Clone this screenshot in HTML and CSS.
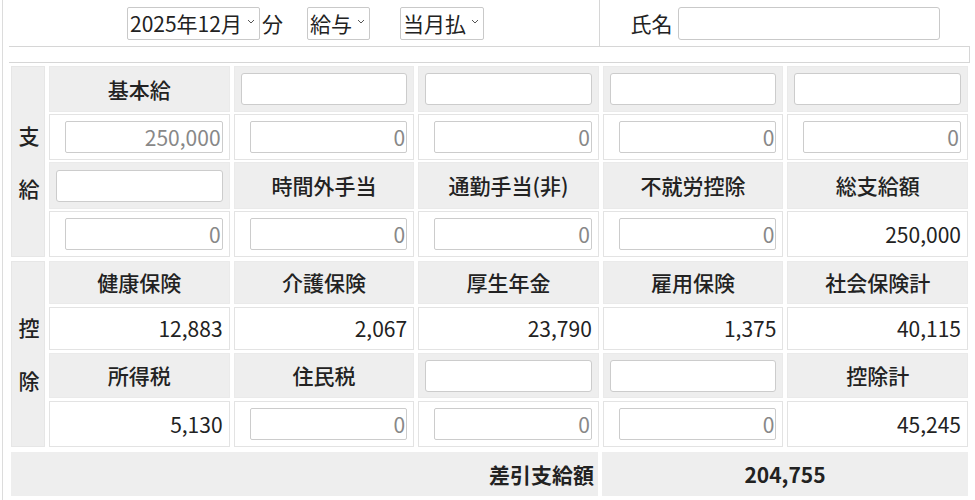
FILE: index.html
```html
<!DOCTYPE html>
<html lang="ja">
<head>
<meta charset="utf-8">
<title>給与明細</title>
<link rel="stylesheet" href="styles.css">
</head>
<body>
<div class="page">
  <div class="top">
    <div class="top-left">
      <span class="sel sel-month">
        <select><option>2025年12月</option></select>
        <svg class="chev" viewBox="0 0 8 5" width="8" height="5"><path d="M1 1 L4 4 L7 1" fill="none" stroke="#555" stroke-width="1"/></svg>
      </span><span class="bun">分</span>
      <span class="sel sel-kind">
        <select><option>給与</option></select>
        <svg class="chev" viewBox="0 0 8 5" width="8" height="5"><path d="M1 1 L4 4 L7 1" fill="none" stroke="#555" stroke-width="1"/></svg>
      </span>
      <span class="sel sel-pay">
        <select><option>当月払</option></select>
        <svg class="chev" viewBox="0 0 8 5" width="8" height="5"><path d="M1 1 L4 4 L7 1" fill="none" stroke="#555" stroke-width="1"/></svg>
      </span>
    </div>
    <div class="top-right">
      <span class="name-label">氏名</span><input class="name-input" type="text">
    </div>
  </div>
  <div class="strip"></div>

  <div class="section sec1">
    <div class="side"><span>支</span><span>給</span></div>
    <div class="cell head">基本給</div>
    <div class="cell head"><input class="hin" type="text"></div>
    <div class="cell head"><input class="hin" type="text"></div>
    <div class="cell head"><input class="hin" type="text"></div>
    <div class="cell head"><input class="hin" type="text"></div>

    <div class="cell val"><input class="vin" type="text" value="250,000"></div>
    <div class="cell val"><input class="vin" type="text" value="0"></div>
    <div class="cell val"><input class="vin" type="text" value="0"></div>
    <div class="cell val"><input class="vin" type="text" value="0"></div>
    <div class="cell val"><input class="vin" type="text" value="0"></div>

    <div class="cell head"><input class="hin" type="text"></div>
    <div class="cell head">時間外手当</div>
    <div class="cell head">通勤手当(非)</div>
    <div class="cell head">不就労控除</div>
    <div class="cell head">総支給額</div>

    <div class="cell val"><input class="vin" type="text" value="0"></div>
    <div class="cell val"><input class="vin" type="text" value="0"></div>
    <div class="cell val"><input class="vin" type="text" value="0"></div>
    <div class="cell val"><input class="vin" type="text" value="0"></div>
    <div class="cell num">250,000</div>
  </div>

  <div class="section sec2">
    <div class="side"><span>控</span><span>除</span></div>
    <div class="cell head">健康保険</div>
    <div class="cell head">介護保険</div>
    <div class="cell head">厚生年金</div>
    <div class="cell head">雇用保険</div>
    <div class="cell head">社会保険計</div>

    <div class="cell num">12,883</div>
    <div class="cell num">2,067</div>
    <div class="cell num">23,790</div>
    <div class="cell num">1,375</div>
    <div class="cell num">40,115</div>

    <div class="cell head">所得税</div>
    <div class="cell head">住民税</div>
    <div class="cell head"><input class="hin" type="text"></div>
    <div class="cell head"><input class="hin" type="text"></div>
    <div class="cell head">控除計</div>

    <div class="cell num">5,130</div>
    <div class="cell val"><input class="vin" type="text" value="0"></div>
    <div class="cell val"><input class="vin" type="text" value="0"></div>
    <div class="cell val"><input class="vin" type="text" value="0"></div>
    <div class="cell num">45,245</div>
  </div>

  <div class="total">
    <div class="total-label">差引支給額</div>
    <div class="total-value">204,755</div>
  </div>
</div>
</body>
</html>
```

FILE: styles.css
```css
* { box-sizing: border-box; }
html, body { margin: 0; padding: 0; background: #fff; }
body {
  font-family: "Noto Sans CJK JP", "Noto Sans", sans-serif;
  font-size: 21px;
  color: #222;
  width: 975px;
  height: 500px;
  overflow: hidden;
}
.page {
  margin-left: 2px;
  border-left: 1px solid #dcdcdc;
  padding: 0 5px 0 6px;
  height: 500px;
}
.top {
  display: flex;
  height: 47px;
  border-bottom: 1px solid #d6d6d6;
}
.top-left {
  width: 591px;
  border-right: 1px solid #d6d6d6;
  display: flex;
  align-items: center;
  justify-content: center;
  padding-left: 3px;
}
.top-right {
  flex: 1;
  display: flex;
  align-items: center;
  justify-content: center;
}
.sel { position: relative; display: inline-block; height: 33px; }
.sel select {
  appearance: none;
  -webkit-appearance: none;
  font-family: inherit;
  font-size: 21px;
  color: #222;
  height: 33px;
  line-height: 31px;
  padding: 0 17px 0 2px;
  border: 1px solid #c9c9c9;
  border-radius: 2px;
  background: #fff;
}
.chev { position: absolute; right: 5px; top: 12px; }
.bun { margin-left: 2px; line-height: 1; }
.sel-kind { margin-left: 24px; }
.sel-pay { margin-left: 30px; }
.name-label { line-height: 1; }
.name-input {
  margin-left: 5px;
  width: 262px;
  height: 33px;
  border: 1px solid #c9c9c9;
  border-radius: 3px;
  background: #fff;
}
.strip {
  height: 16px;
  border-bottom: 1px solid #d6d6d6;
  border-right: 1px solid #d6d6d6;
}
.section {
  display: grid;
  grid-template-columns: 34px repeat(5, 1fr);
  column-gap: 4px;
  row-gap: 2px;
  margin: 3px 2px 0 2px;
}
.sec1 { grid-template-rows: 46px 46px 47px 46px; }
.sec2 { grid-template-rows: 43px 43px 45px 46px; margin-top: 4px; row-gap: 3px; }
.side {
  grid-row: 1 / span 4;
  background: #eeeeee;
  border: 1px solid #e6e6e6;
  display: flex;
  flex-direction: column;
  align-items: center;
  justify-content: center;
  gap: 32px;
  font-weight: 500;
  line-height: 1;
  padding-left: 2px;
}
.cell {
  border: 1px solid #e3e3e3;
  display: flex;
  align-items: center;
  line-height: 1;
}
.head {
  background: #eeeeee;
  border-color: #eaeaea;
  justify-content: center;
  font-weight: 500;
  padding: 0 6px;
}
.val { background: #fff; padding: 0 6px 0 15px; }
.num { background: #fff; justify-content: flex-end; padding-right: 6px; }
.hin, .vin {
  width: 100%;
  height: 32px;
  border: 1px solid #cccccc;
  border-radius: 3px;
  background: #fff;
  font-family: inherit;
  font-size: 21px;
  padding: 0 1px 0 4px;
}
.vin { text-align: right; color: #888; border-radius: 2px; }
.total {
  display: grid;
  grid-template-columns: 1fr 366px;
  column-gap: 4px;
  height: 44px;
  margin: 5px 2px 0 2px;
}
.total-label, .total-value {
  background: #eeeeee;
  display: flex;
  align-items: center;
  font-weight: bold;
  line-height: 1;
}
.total-label { justify-content: flex-end; padding-right: 4px; }
.total-value { justify-content: center; }
```
